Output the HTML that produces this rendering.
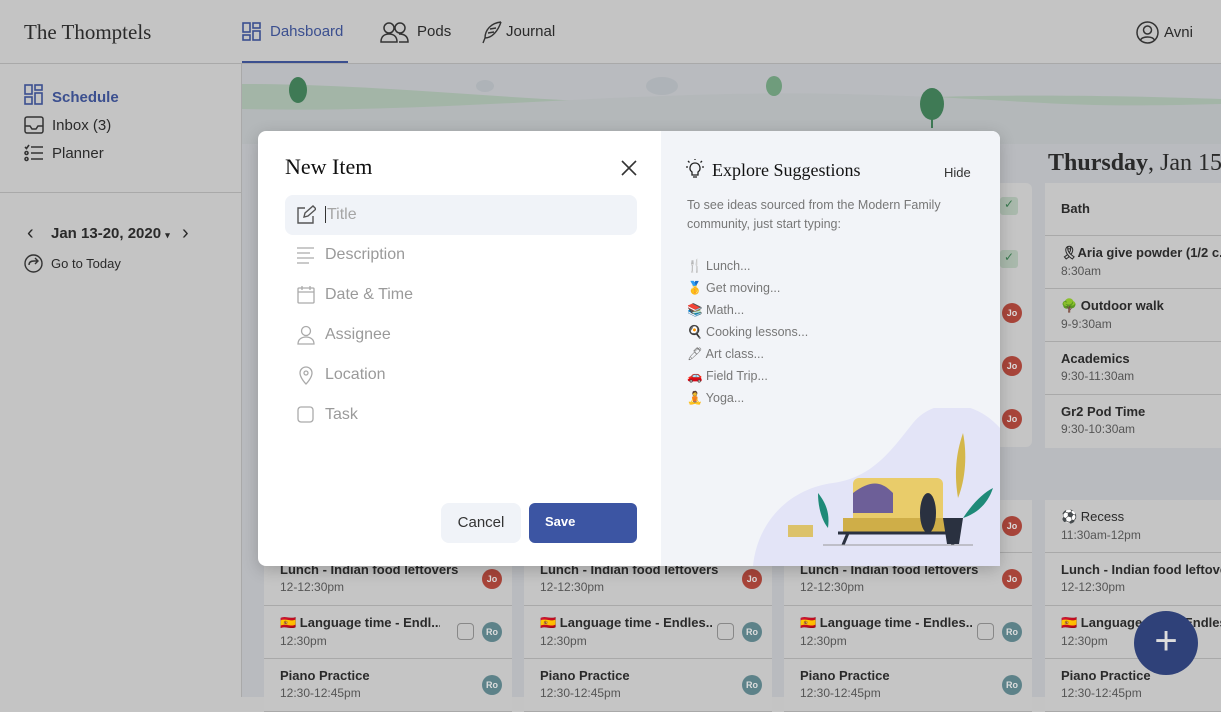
<!DOCTYPE html>
<html style="background:#c4c4c4"><head><meta charset="utf-8"><style>
*{box-sizing:border-box;margin:0;padding:0}
body{width:1221px;height:697px;overflow:hidden;position:relative;background:#c4c4c4;font-family:"Liberation Sans",sans-serif;color:#2a2a2a}
.abs{position:absolute}
.hdr{left:0;top:0;width:1221px;height:64px;border-bottom:1px solid #a9a9a9;background:#c4c4c4}
.side{left:0;top:64px;width:242px;height:633px;border-right:1px solid #a9a9a9;background:#c4c4c4}
.main{left:242px;top:64px;width:979px;height:633px;background:#b9bbbf}
.col{position:absolute;width:248px;background:#bdbdbd;border-radius:6px}
.card{position:absolute;left:0;width:100%;height:53px;background:#c5c5c5;border-bottom:1px solid #a9a9a9;padding:9px 16px}
.t{font-size:13px;font-weight:bold;color:#2a2a2a;white-space:nowrap;overflow:hidden}
.s{font-size:12px;color:#555;margin-top:3px}
.av{position:absolute;right:10px;top:16px;width:20px;height:20px;border-radius:50%;color:#ddd;font-size:9px;font-weight:bold;text-align:center;line-height:20px}
.jo{background:#a8453a}.ro{background:#5d8289}
.cb{position:absolute;right:38px;top:17px;width:17px;height:17px;border:1.5px solid #888;border-radius:4px}
.fld{position:absolute;left:285px;width:352px;height:40px;font-size:16px;color:#9a9a9a;padding:11px 0 0 40px}
.fld svg{position:absolute;left:11px;top:10px}
</style></head><body>
<div class="abs hdr">
<div class="abs" style="left:24px;top:20px;font-family:'Liberation Serif',serif;font-size:21px;color:#2a2a2a">The Thomptels</div>
<svg class="abs" style="left:242px;top:22px" width="20" height="20" fill="none" stroke="#3b4f8f" stroke-width="1.6"><rect x="1" y="1" width="7" height="9"/><rect x="11" y="1" width="7" height="5"/><rect x="1" y="13" width="7" height="5"/><rect x="11" y="9" width="7" height="9"/></svg>
<div class="abs" style="left:270px;top:23px;font-size:15px;color:#3b4f8f">Dahsboard</div>
<div class="abs" style="left:242px;top:61px;width:106px;height:2px;background:#3b4f8f"></div>
<svg class="abs" style="left:380px;top:21px" width="30" height="22" fill="none" stroke="#333" stroke-width="1.5"><circle cx="9" cy="7" r="5"/><path d="M1 21c0-6 4-8 8-8s8 2 8 8z"/><circle cx="20" cy="7" r="5"/><path d="M19 13c5 0 9 2 9 8h-9"/></svg>
<div class="abs" style="left:417px;top:23px;font-size:15px">Pods</div>
<svg class="abs" style="left:481px;top:20px" width="22" height="25" fill="none" stroke="#333" stroke-width="1.4"><path d="M20 2C10 3 4 10 4 18l-2 5M4 18c7 0 13-7 16-16M7 13l6-1M9 9l6-1"/></svg>
<div class="abs" style="left:506px;top:23px;font-size:15px">Journal</div>
<svg class="abs" style="left:1136px;top:21px" width="23" height="23" fill="none" stroke="#333" stroke-width="1.5"><circle cx="11.5" cy="11.5" r="10.5"/><circle cx="11.5" cy="9" r="4"/><path d="M4.5 19c2-4 12-4 14 0"/></svg>
<div class="abs" style="left:1164px;top:24px;font-size:15px">Avni</div>
</div>
<div class="abs side">
<svg class="abs" style="left:24px;top:20px" width="20" height="22" fill="none" stroke="#3b4f8f" stroke-width="1.6"><rect x="1" y="1" width="7" height="9"/><rect x="11" y="1" width="7" height="5"/><rect x="1" y="13" width="7" height="7"/><rect x="11" y="9" width="7" height="11"/></svg>
<div class="abs" style="left:52px;top:25px;font-size:15px;font-weight:bold;color:#3b4f8f">Schedule</div>
<svg class="abs" style="left:24px;top:52px" width="20" height="18" fill="none" stroke="#333" stroke-width="1.5"><rect x="1" y="1" width="18" height="16" rx="2"/><path d="M1 10h5l2 3h4l2-3h5"/></svg>
<div class="abs" style="left:52px;top:53px;font-size:15px">Inbox (3)</div>
<svg class="abs" style="left:24px;top:80px" width="20" height="18" fill="none" stroke="#333" stroke-width="1.6"><circle cx="2.5" cy="9" r="1.5"/><circle cx="2.5" cy="15" r="1.5"/><path d="M1 3l1.5 1.5L5 1M7 3h12M7 9h12M7 15h12"/></svg>
<div class="abs" style="left:52px;top:81px;font-size:15px">Planner</div>
<div class="abs" style="left:0;top:128px;width:241px;height:1px;background:#a9a9a9"></div>
<div class="abs" style="left:27px;top:158px;font-size:20px">‹</div>
<div class="abs" style="left:51px;top:161px;font-size:15px;font-weight:bold">Jan 13-20, 2020 <span style="font-size:9px">▾</span></div>
<div class="abs" style="left:182px;top:158px;font-size:20px">›</div>
<svg class="abs" style="left:24px;top:190px" width="19" height="19" fill="none" stroke="#333" stroke-width="1.4"><circle cx="9.5" cy="9.5" r="8.5"/><path d="M5 11c0-3 2-4 5-4h3M11 4l3 3-3 3"/></svg>
<div class="abs" style="left:51px;top:192px;font-size:13px">Go to Today</div>
</div>
<div class="abs main">
<svg class="abs" style="left:0;top:0" width="979" height="80"><path d="M0 20C150 20 300 40 450 40S700 25 979 35V80H0z" fill="#a3b5a7"/><path d="M0 45C200 50 400 25 600 30S800 45 979 40V80H0z" fill="#b4b8ba"/><ellipse cx="56" cy="26" rx="9" ry="13" fill="#3f7a55"/><ellipse cx="532" cy="22" rx="8" ry="10" fill="#6f9c7c"/><ellipse cx="690" cy="40" rx="12" ry="16" fill="#3f7a55"/><rect x="689" y="50" width="2" height="14" fill="#3f7a55"/><ellipse cx="420" cy="22" rx="16" ry="9" fill="#aeb3b8"/><ellipse cx="243" cy="22" rx="9" ry="6" fill="#aeb3b8"/></svg>
<div class="abs" style="left:806px;top:86px;font-family:'Liberation Serif',serif;font-size:24px;white-space:nowrap"><b>Thursday</b>, Jan 15</div>
</div>
<div class="col" style="left:784px;top:183px;height:264px;background:#c5c5c5">
<div class="av jo" style="top:120px">Jo</div><div class="av jo" style="top:173px">Jo</div><div class="av jo" style="top:226px">Jo</div>
<div class="abs" style="right:14px;top:14px;width:18px;height:18px;background:#a9b9ac;border-radius:3px;color:#3a7a50;font-size:12px;text-align:center">✓</div>
<div class="abs" style="right:14px;top:67px;width:18px;height:18px;background:#a9b9ac;border-radius:3px;color:#3a7a50;font-size:12px;text-align:center">✓</div>
</div>
<div class="col" style="left:1045px;top:183px;height:264px">
<div class="card" style="top:0"><div class="t" style="margin-top:9px">Bath</div></div>
<div class="card" style="top:53px"><div class="t">🎗Aria give powder (1/2 c...</div><div class="s">8:30am</div></div>
<div class="card" style="top:106px"><div class="t">🌳 Outdoor walk</div><div class="s">9-9:30am</div></div>
<div class="card" style="top:159px"><div class="t">Academics</div><div class="s">9:30-11:30am</div></div>
<div class="card" style="top:212px;border:none"><div class="t">Gr2 Pod Time</div><div class="s">9:30-10:30am</div></div>
</div>
<div class="col" style="left:264px;top:500px;height:200px">
<div class="card" style="top:53px"><div class="t">Lunch - Indian food leftovers</div><div class="s">12-12:30pm</div><div class="av jo">Jo</div></div>
<div class="card" style="top:106px"><div class="t" style="width:160px">🇪🇸 Language time - Endl...</div><div class="s">12:30pm</div><div class="cb"></div><div class="av ro">Ro</div></div>
<div class="card" style="top:159px"><div class="t">Piano Practice</div><div class="s">12:30-12:45pm</div><div class="av ro">Ro</div></div>
</div>
<div class="col" style="left:524px;top:500px;height:200px">
<div class="card" style="top:53px"><div class="t">Lunch - Indian food leftovers</div><div class="s">12-12:30pm</div><div class="av jo">Jo</div></div>
<div class="card" style="top:106px"><div class="t" style="width:172px">🇪🇸 Language time - Endles...</div><div class="s">12:30pm</div><div class="cb"></div><div class="av ro">Ro</div></div>
<div class="card" style="top:159px"><div class="t">Piano Practice</div><div class="s">12:30-12:45pm</div><div class="av ro">Ro</div></div>
</div>
<div class="col" style="left:784px;top:500px;height:200px">
<div class="card" style="top:0"><div class="av jo">Jo</div></div>
<div class="card" style="top:53px"><div class="t">Lunch - Indian food leftovers</div><div class="s">12-12:30pm</div><div class="av jo">Jo</div></div>
<div class="card" style="top:106px"><div class="t" style="width:172px">🇪🇸 Language time - Endles...</div><div class="s">12:30pm</div><div class="cb"></div><div class="av ro">Ro</div></div>
<div class="card" style="top:159px"><div class="t">Piano Practice</div><div class="s">12:30-12:45pm</div><div class="av ro">Ro</div></div>
</div>
<div class="col" style="left:1045px;top:500px;height:200px">
<div class="card" style="top:0"><div class="t" style="font-weight:normal">⚽ Recess</div><div class="s">11:30am-12pm</div></div>
<div class="card" style="top:53px"><div class="t">Lunch - Indian food leftovers</div><div class="s">12-12:30pm</div></div>
<div class="card" style="top:106px"><div class="t">🇪🇸 Language time - Endles...</div><div class="s">12:30pm</div></div>
<div class="card" style="top:159px"><div class="t">Piano Practice</div><div class="s">12:30-12:45pm</div></div>
</div>
<div class="abs" style="left:1134px;top:611px;width:64px;height:64px;border-radius:50%;background:#2f4179;color:#ddd;font-size:40px;font-weight:300;text-align:center;line-height:60px">+</div>
<div class="abs" style="left:258px;top:131px;width:742px;height:435px;border-radius:8px;background:#fff;box-shadow:0 4px 16px rgba(0,0,0,.2);overflow:hidden">
<div class="abs" style="left:403px;top:0;width:339px;height:435px;background:#f2f4f8"></div>
</div>
<div class="abs" style="left:285px;top:154px;font-family:'Liberation Serif',serif;font-size:22px;color:#111">New Item</div>
<svg class="abs" style="left:621px;top:160px" width="16" height="16" stroke="#333" stroke-width="1.6"><path d="M1 1l14 14M15 1L1 15"/></svg>
<div class="fld" style="top:195px;background:#f0f3f8;border-radius:8px;color:#a5a5a5"><svg width="20" height="20" fill="none" stroke="#555" stroke-width="1.4"><path d="M9 3H2v15h15v-7M8 12l1-4 8-7 3 3-8 7z"/></svg><span style="border-left:1px solid #333;padding-left:1px">Title</span></div>
<div class="fld" style="top:235px"><svg width="20" height="20" stroke="#aaa" stroke-width="1.3"><path d="M1 3h17M1 8h13M1 13h17M1 18h12"/></svg>Description</div>
<div class="fld" style="top:275px"><svg width="20" height="20" fill="none" stroke="#aaa" stroke-width="1.3"><rect x="2" y="3" width="16" height="15" rx="1"/><path d="M2 7h16M6 1v4M14 1v4"/></svg>Date &amp; Time</div>
<div class="fld" style="top:315px"><svg width="20" height="20" fill="none" stroke="#aaa" stroke-width="1.3"><circle cx="10" cy="6" r="4.5"/><path d="M2 19c0-5 4-7 8-7s8 2 8 7z"/></svg>Assignee</div>
<div class="fld" style="top:355px"><svg width="20" height="20" fill="none" stroke="#aaa" stroke-width="1.3"><path d="M10 19s-6-6-6-11a6 6 0 0112 0c0 5-6 11-6 11z"/><circle cx="10" cy="8" r="2"/></svg>Location</div>
<div class="fld" style="top:395px"><svg width="20" height="20" fill="none" stroke="#aaa" stroke-width="1.3"><rect x="2" y="2" width="15" height="15" rx="3"/></svg>Task</div>
<div class="abs" style="left:441px;top:503px;width:80px;height:40px;background:#f0f3f8;border-radius:8px;font-size:15px;text-align:center;line-height:40px;color:#333">Cancel</div>
<div class="abs" style="left:529px;top:503px;width:108px;height:40px;background:#3c55a3;border-radius:6px;font-size:13px;font-weight:bold;color:#fff;padding:11px 16px">Save</div>
<svg class="abs" style="left:685px;top:159px" width="20" height="20" fill="none" stroke="#222" stroke-width="1.3"><path d="M10 4a5 5 0 00-3 9v3h6v-3a5 5 0 00-3-9zM8 18h4M1 8h2M17 8h2M3 2l1.5 1.5M17 2l-1.5 1.5M10 0v1"/></svg>
<div class="abs" style="left:712px;top:160px;font-family:'Liberation Serif',serif;font-size:18px;color:#111">Explore Suggestions</div>
<div class="abs" style="left:944px;top:165px;font-size:13px;color:#333">Hide</div>
<div class="abs" style="left:687px;top:196px;font-size:12.5px;line-height:19px;color:#777;width:290px">To see ideas sourced from the Modern Family community, just start typing:</div>
<div class="abs" style="left:687px;top:255px;font-size:12.5px;line-height:22px;color:#777">🍴 Lunch...<br>🥇 Get moving...<br>📚 Math...<br>🍳 Cooking lessons...<br>🖊 Art class...<br>🚗 Field Trip...<br>🧘 Yoga...</div>
<svg class="abs" style="left:753px;top:408px" width="247" height="158"><path d="M0 158C5 110 40 80 80 75S140 40 160 15S220-10 247 20V158z" fill="#e3e4f7"/><path d="M205 90c-5-30 0-50 5-65 4 20 3 45-5 65z" fill="#d4b74a"/><path d="M210 110c10-15 20-25 30-30-5 15-15 25-30 30zM75 120c-8-10-10-25-10-35 8 10 12 20 10 35z" fill="#1e8a78"/><rect x="100" y="70" width="90" height="50" rx="6" fill="#e9cc6a"/><rect x="90" y="110" width="110" height="15" fill="#cfae48"/><path d="M100 85c20-15 30-10 40 0v20h-40z" fill="#6d5f98"/><ellipse cx="175" cy="105" rx="8" ry="20" fill="#2a3140"/><rect x="35" y="117" width="25" height="12" fill="#dcc26a"/><path d="M85 125h120M95 125l-5 12M195 125l5 12" stroke="#2a3140" stroke-width="3"/><path d="M70 137h150" stroke="#999"/><path d="M190 110h20l-4 26h-12z" fill="#2a3140"/></svg>
</body></html>
